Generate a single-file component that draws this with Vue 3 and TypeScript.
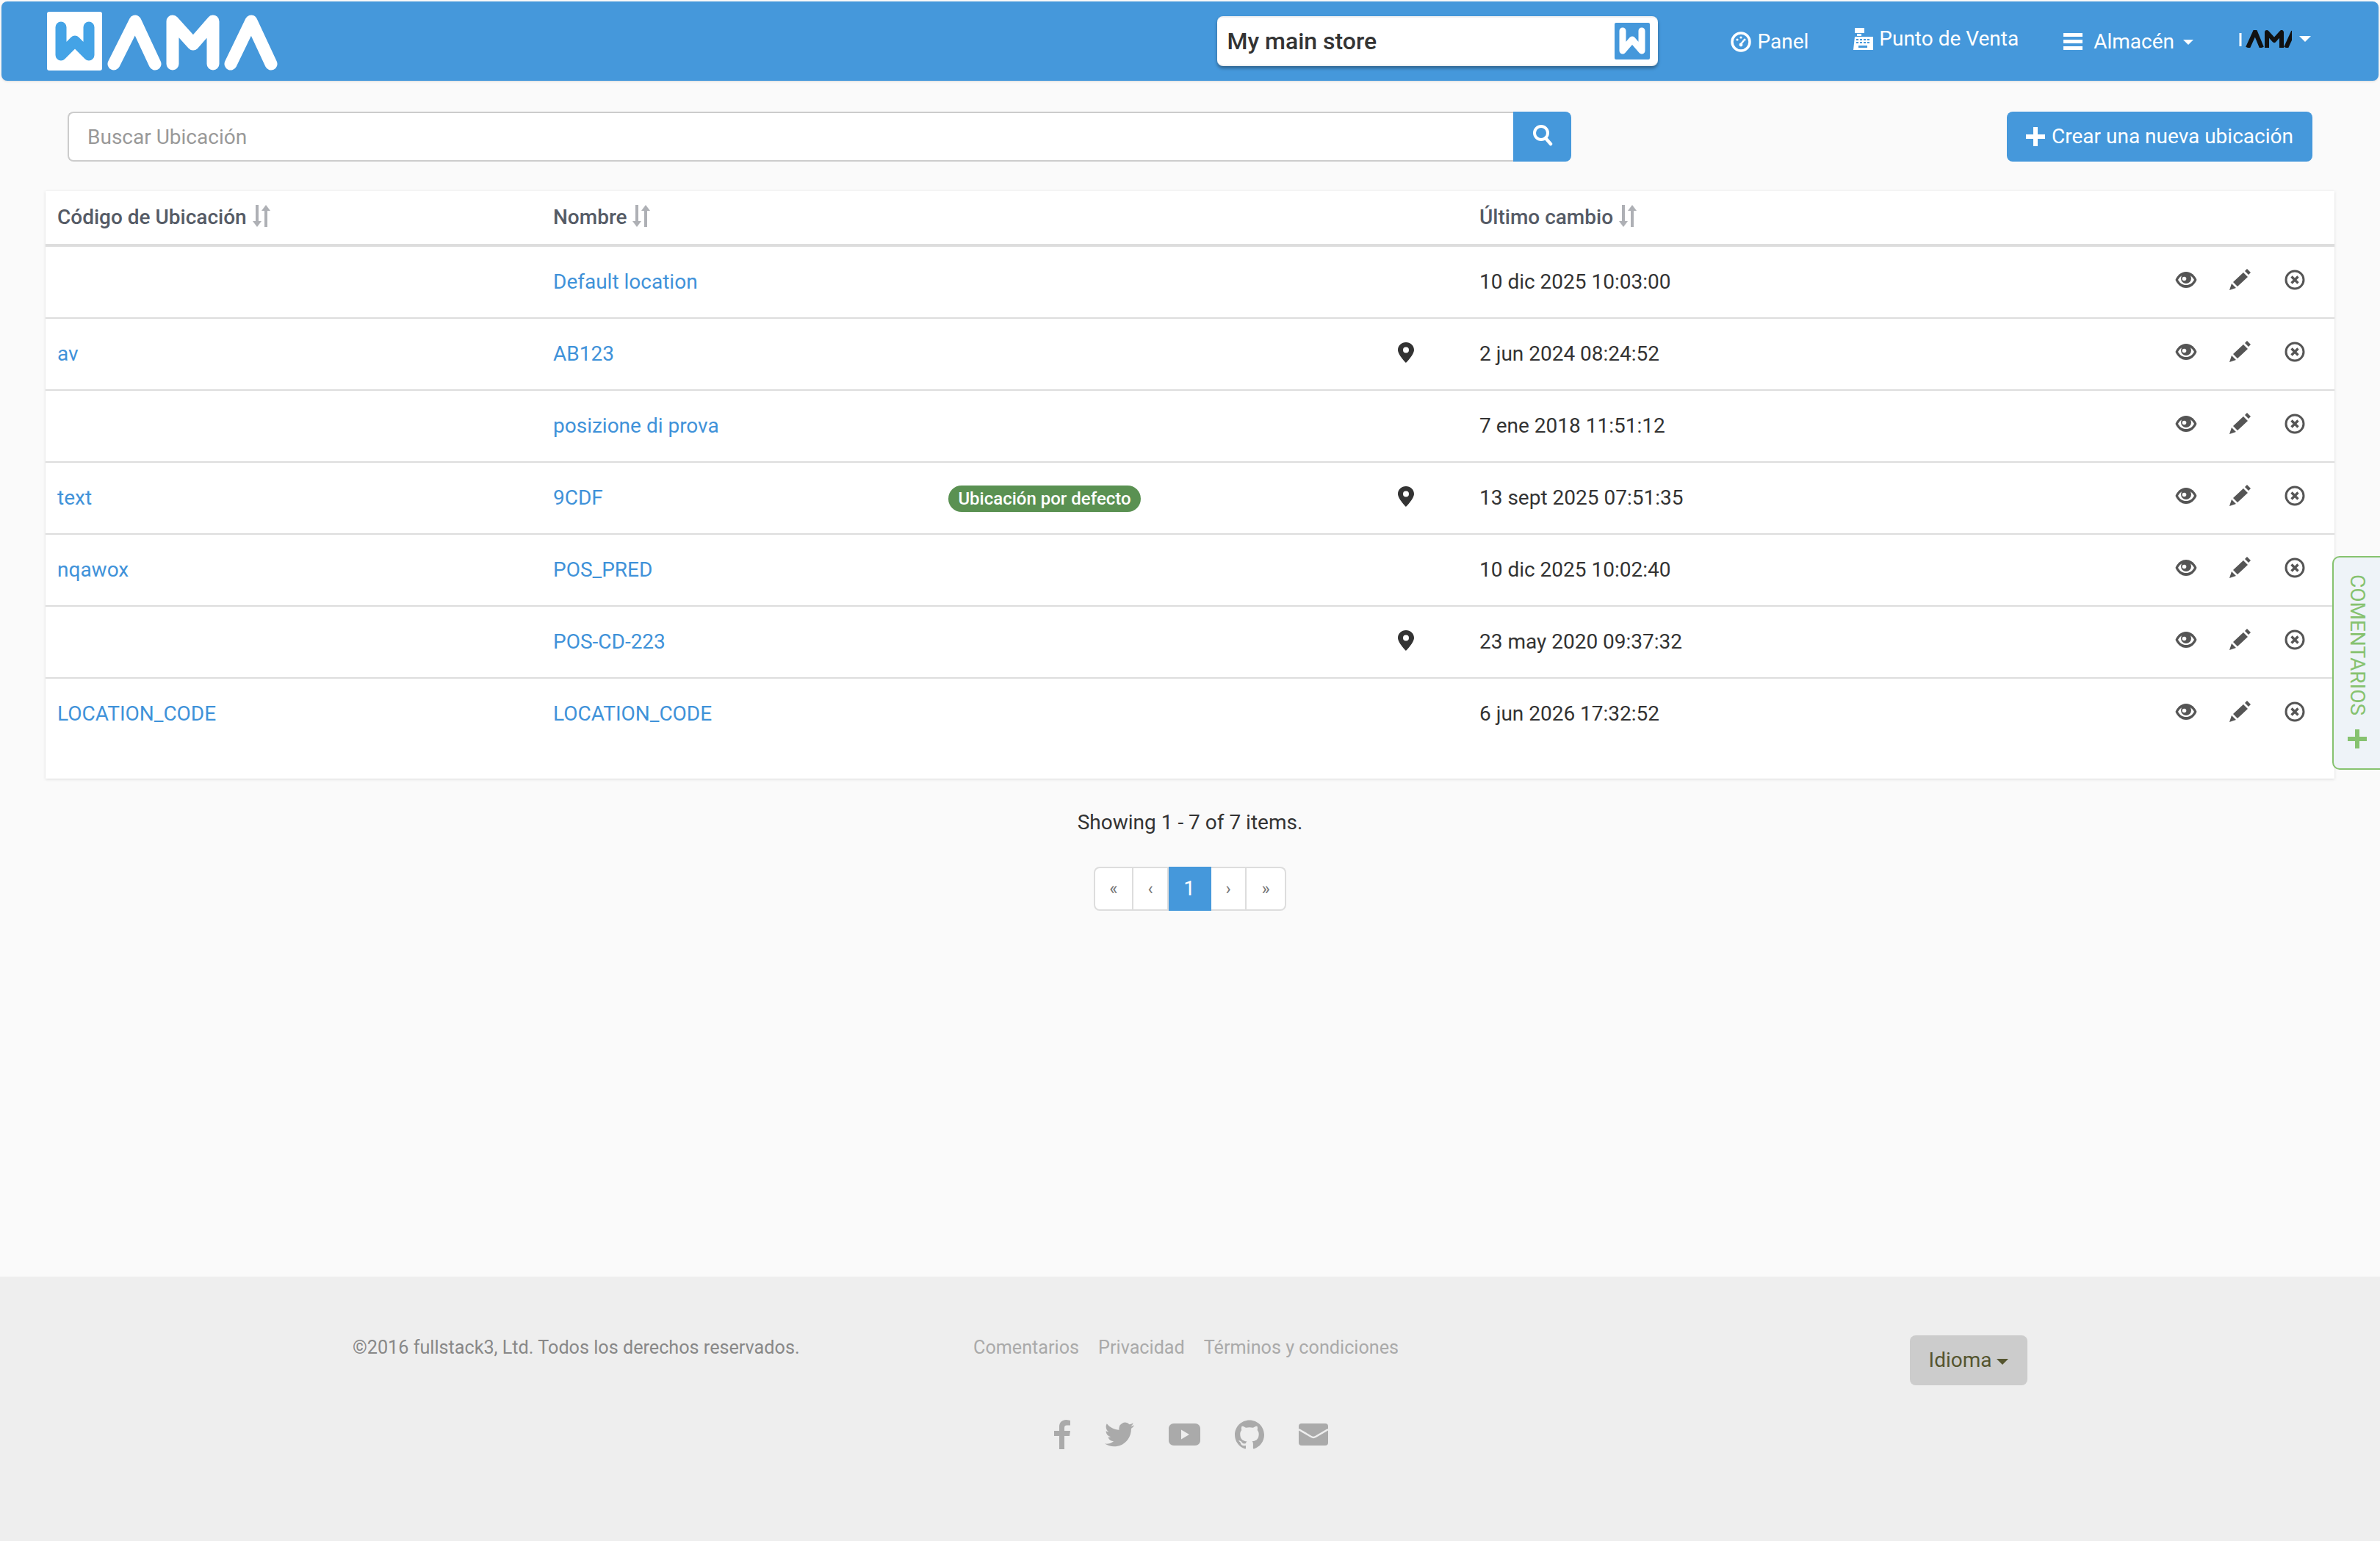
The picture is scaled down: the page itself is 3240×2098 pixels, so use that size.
<script setup lang="ts">
interface Row { code: string; name: string; badge?: string; pin?: boolean; date: string }
const rows: Row[] = [
  { code: '', name: 'Default location', date: '10 dic 2025 10:03:00' },
  { code: 'av', name: 'AB123', pin: true, date: '2 jun 2024 08:24:52' },
  { code: '', name: 'posizione di prova', date: '7 ene 2018 11:51:12' },
  { code: 'text', name: '9CDF', badge: 'Ubicación por defecto', pin: true, date: '13 sept 2025 07:51:35' },
  { code: 'nqawox', name: 'POS_PRED', date: '10 dic 2025 10:02:40' },
  { code: '', name: 'POS-CD-223', pin: true, date: '23 may 2020 09:37:32' },
  { code: 'LOCATION_CODE', name: 'LOCATION_CODE', date: '6 jun 2026 17:32:52' },
]
const heads = ['Código de Ubicación', 'Nombre', '', '', 'Último cambio', '']
const footerLinks = ['Comentarios', 'Privacidad', 'Términos y condiciones']
</script>

<template>
  <div class="page">
    <header class="topbar">
      <svg class="logo" viewBox="64 16 314 80" aria-label="WAMA">
        <rect x="64" y="16" width="75" height="80" rx="3" fill="#fff" />
        <polyline points="83,37 83,75 102,56 121,75 121,37" fill="none" stroke="#44a3e6" stroke-width="15" stroke-linecap="round" stroke-linejoin="round" />
        <g fill="none" stroke="#fff" stroke-width="17" stroke-linecap="round" stroke-linejoin="round">
          <polyline points="155,87 184,29 211,87" />
          <polyline points="235,87 235,29 263,60 290,29 290,87" />
          <polyline points="314,87 342,29 369,87" />
        </g>
      </svg>
      <div class="store">
        <span class="store-name">My main store</span>
        <svg class="store-w" viewBox="0 0 48 50">
          <rect width="48" height="50" rx="2" fill="#4598db" />
          <polyline points="11,11 11,38 24,23 37,38 37,11" fill="none" stroke="#fff" stroke-width="9" stroke-linecap="round" stroke-linejoin="round" />
        </svg>
      </div>
      <nav class="nav">
        <a class="nav-item">
          <svg class="nav-ico" width="28" height="30" viewBox="0 0 28 30">
            <circle cx="14" cy="15" r="12" fill="none" stroke="#fff" stroke-width="3.5" />
            <circle cx="9" cy="12" r="1.6" fill="#fff" /><circle cx="14" cy="9" r="1.6" fill="#fff" /><circle cx="19" cy="12" r="1.6" fill="#fff" />
            <path d="M14 18 L18 13" stroke="#fff" stroke-width="2.4" />
            <circle cx="14" cy="19" r="2.4" fill="#fff" />
          </svg>
          <span>Panel</span>
        </a>
        <a class="nav-item raised">
          <svg class="nav-ico" width="30" height="30" viewBox="0 0 30 30">
            <path fill="#fff" d="M3 0h13v7H3zM6 8h6v3H6zM3 12h25v18H1zM5 15v2h3v-2zM10 15v2h3v-2zM15 15v2h3v-2zM20 15v2h3v-2zM5 19v2h3v-2zM10 19v2h3v-2zM15 19v2h3v-2zM20 19v2h3v-2zM8 24v3h12v-3z" fill-rule="evenodd" />
          </svg>
          <span>Punto de Venta</span>
        </a>
        <a class="nav-item wide">
          <svg width="28" height="24" viewBox="0 0 28 24"><path fill="#fff" d="M1 0h26v5H1zM1 9h26v5H1zM1 18h26v5H1z" /></svg>
          <span>Almacén</span><i class="caret small" />
        </a>
        <a class="nav-item raised account">
          <svg class="mini" viewBox="0 0 72 24">
            <g fill="none" stroke="#111" stroke-width="6" stroke-linejoin="round">
              <path d="M2 4v18" stroke="#fff" stroke-width="3" />
              <polyline points="12,24 22,2 31,24" />
              <polyline points="38,24 38,3 48,14 58,3 58,24" />
              <polyline points="64,24 74,2" />
            </g>
          </svg>
          <i class="caret" />
        </a>
      </nav>
    </header>

    <section class="toolbar">
      <div class="search">
        <input class="search-input" placeholder="Buscar Ubicación" />
        <button class="search-btn" aria-label="Buscar">
          <svg width="28" height="30" viewBox="0 0 28 30">
            <circle cx="12" cy="12" r="9" fill="none" stroke="#fff" stroke-width="4" />
            <path d="M18 19 L25 27" stroke="#fff" stroke-width="4.5" stroke-linecap="round" />
          </svg>
        </button>
      </div>
      <button class="create">
        <svg width="26" height="26" viewBox="0 0 26 26"><path fill="#fff" d="M10 0h6v10h10v6H16v10h-6V16H0v-6h10z" /></svg>
        <span>Crear una nueva ubicación</span>
      </button>
    </section>

    <section class="card">
      <table class="grid">
        <colgroup>
          <col class="c1" /><col class="c2" /><col class="c3" /><col class="c4" /><col class="c5" /><col class="c6" />
        </colgroup>
        <thead>
          <tr>
            <th v-for="(h, i) in heads" :key="i">
              <template v-if="h">
                {{ h }}
                <svg class="sort" width="26" height="30" viewBox="0 0 26 30">
                  <path fill="#aeb0b5" d="M4 0h4v22h4l-6 8-6-8h4zM20 30h-4V8h-4l6-8 6 8h-4z" />
                </svg>
              </template>
            </th>
          </tr>
        </thead>
        <tbody>
          <tr v-for="r in rows" :key="r.name">
            <td><a class="link">{{ r.code }}</a></td>
            <td><a class="link">{{ r.name }}</a></td>
            <td><span v-if="r.badge" class="badge">{{ r.badge }}</span></td>
            <td>
              <svg v-if="r.pin" class="pin" width="22" height="28" viewBox="0 0 22 28">
                <path fill="#333" fill-rule="evenodd" d="M11 0C5 0 0 4.6 0 10.5 0 17 11 28 11 28s11-11 11-17.5C22 4.6 17 0 11 0zm0 6.5a4 4 0 1 1 0 8 4 4 0 0 1 0-8z" />
              </svg>
            </td>
            <td>{{ r.date }}</td>
            <td class="actions-cell">
              <div class="actions">
                <svg width="30" height="24" viewBox="0 0 30 24">
                  <path fill="#555" d="M15 1C8 1 3 6 .5 12 3 18 8 23 15 23s12-5 14.5-11C27 6 22 1 15 1z" />
                  <path fill="#fff" d="M4 12c2.500-4.500 6-7 11-7s8.500 2.500 11 7c-2.500 4.500-6 7-11 7s-8.500-2.500-11-7z" />
                  <circle cx="15" cy="10" r="7" fill="#555" />
                  <circle cx="12.500" cy="10.500" r="2.800" fill="#fff" />
                </svg>
                <svg width="30" height="30" viewBox="0 0 30 30">
                  <path fill="#555" d="M0 29l3-9 6 6zM5 18L19 5l6 6-14 13zM21 3l3-3 5 5-3 3z" />
                </svg>
                <svg width="28" height="28" viewBox="0 0 28 28">
                  <circle cx="14" cy="14" r="12" fill="none" stroke="#555" stroke-width="3" />
                  <path d="M9.500 9.500l9 9M18.500 9.500l-9 9" stroke="#555" stroke-width="3.400" />
                </svg>
              </div>
            </td>
          </tr>
        </tbody>
      </table>
    </section>

    <p class="summary">Showing 1 - 7 of 7 items.</p>

    <ul class="pager">
      <li class="p-first">«</li>
      <li class="p-prev">‹</li>
      <li class="p-active">1</li>
      <li class="p-next">›</li>
      <li class="p-last">»</li>
    </ul>

    <footer class="footer">
      <div class="foot-row">
        <p class="copy">©2016 fullstack3, Ltd. Todos los derechos reservados.</p>
        <div class="foot-links"><a v-for="l in footerLinks" :key="l">{{ l }}</a></div>
        <button class="lang">Idioma <i class="caret dark" /></button>
      </div>
      <div class="social">
        <svg width="22" height="40" viewBox="0 0 22 40"><path fill="#aaa" d="M14 40V22h7l1-7h-8v-4c0-2 .6-3.500 3.500-3.500H22V1c-1-.2-3.200-1-5.500-1C11 0 7 3.500 7 9.500V15H0v7h7v18z" /></svg>
        <svg width="40" height="40" viewBox="0 0 24 24"><path fill="#aaa" d="M23.953 4.570a10 10 0 01-2.825.775 4.958 4.958 0 002.163-2.723c-.951.555-2.005.959-3.127 1.184a4.920 4.920 0 00-8.384 4.482C7.690 8.095 4.067 6.130 1.640 3.162a4.822 4.822 0 00-.666 2.475c0 1.710.870 3.213 2.188 4.096a4.904 4.904 0 01-2.228-.616v.060a4.923 4.923 0 003.946 4.827 4.996 4.996 0 01-2.212.085 4.936 4.936 0 004.604 3.417 9.867 9.867 0 01-6.102 2.105c-.390 0-.779-.023-1.170-.067a13.995 13.995 0 007.557 2.209c9.053 0 13.998-7.496 13.998-13.985 0-.210 0-.420-.015-.630A9.935 9.935 0 0024 4.590z" /></svg>
        <svg width="43" height="30" viewBox="0 0 43 30"><path fill="#aaa" fill-rule="evenodd" d="M7 0h29c4 0 7 3 7 7v16c0 4-3 7-7 7H7c-4 0-7-3-7-7V7c0-4 3-7 7-7zm10 8.500v13l11-6.500z" /></svg>
        <svg width="40" height="40" viewBox="0 0 24 24"><path fill="#aaa" d="M12 .297c-6.630 0-12 5.373-12 12 0 5.303 3.438 9.800 8.205 11.385.600.113.820-.258.820-.577 0-.285-.010-1.040-.015-2.040-3.338.724-4.042-1.610-4.042-1.610C4.422 18.070 3.633 17.700 3.633 17.700c-1.087-.744.084-.729.084-.729 1.205.084 1.838 1.236 1.838 1.236 1.070 1.835 2.809 1.305 3.495.998.108-.776.417-1.305.760-1.605-2.665-.300-5.466-1.332-5.466-5.930 0-1.310.465-2.380 1.235-3.220-.135-.303-.540-1.523.105-3.176 0 0 1.005-.322 3.300 1.230.960-.267 1.980-.399 3-.405 1.020.006 2.040.138 3 .405 2.280-1.552 3.285-1.230 3.285-1.230.645 1.653.240 2.873.120 3.176.765.840 1.230 1.910 1.230 3.220 0 4.610-2.805 5.625-5.475 5.920.420.360.810 1.096.810 2.220 0 1.606-.015 2.896-.015 3.286 0 .315.210.690.825.570C20.565 22.092 24 17.592 24 12.297c0-6.627-5.373-12-12-12" /></svg>
        <svg width="40" height="30" viewBox="0 0 40 30">
          <rect width="40" height="30" rx="4" fill="#aaa" />
          <path d="M0 8l17 10c2 1.200 4 1.200 6 0L40 8" fill="none" stroke="#eee" stroke-width="2.500" />
        </svg>
      </div>
    </footer>

    <aside class="feedback">
      <span class="feedback-text">COMENTARIOS</span>
      <svg width="26" height="26" viewBox="0 0 26 26"><path fill="#86c26f" d="M10 0h6v10h10v6H16v10h-6V16H0v-6h10z" /></svg>
    </aside>
  </div>
</template>

<style scoped>
.page {
  position: relative;
  box-sizing: border-box;
  min-height: 2098px;
  width: 3240px;
  display: flex;
  flex-direction: column;
  background: #fafafa;
  color: #333;
  font-family: Roboto, "Liberation Sans", sans-serif;
  font-size: 28px;
  line-height: 40px;
  overflow: hidden;
}
.topbar {
  margin: 2px 2px 0;
  height: 108px;
  display: flex;
  align-items: center;
  padding-left: 62px;
  padding-right: 92px;
  box-sizing: border-box;
  background: #4598db;
  border-radius: 8px;
  box-shadow: 0 1px 3px rgba(0, 0, 0, 0.12);
}
.logo { width: 314px; height: 80px; flex: none; }
.store {
  margin-left: auto;
  width: 600px;
  height: 68px;
  box-sizing: border-box;
  padding: 0 11px 0 13px;
  display: flex;
  align-items: center;
  justify-content: space-between;
  background: #fff;
  border-radius: 8px;
  border-top: 2px solid #eef0f2;
  border-bottom: 2px solid #eef0f2;
  box-shadow: 0 3px 4px rgba(0, 0, 0, 0.35);
}
.store-name { font-size: 32px; font-weight: 500; color: #333; }
.store-w { width: 48px; height: 50px; }
.nav { margin-left: 99px; display: flex; align-items: center; gap: 60px; }
.nav-item {
  display: flex;
  align-items: center;
  gap: 8px;
  color: #fff;
  white-space: nowrap;
  padding-top: 2px;
}
.nav-item.raised { padding-top: 0; padding-bottom: 6px; gap: 6px; }
.nav-item.wide { gap: 14px; }
.nav-item.account { gap: 10px; margin-left: 2px; }
.mini { width: 72px; height: 24px; }
.caret {
  display: inline-block;
  width: 0;
  height: 0;
  border-left: 8px solid transparent;
  border-right: 8px solid transparent;
  border-top: 8px solid #fff;
}
.caret.small { border-left-width: 7px; border-right-width: 7px; border-top-width: 7px; margin-left: -2px; }
.caret.dark { border-top-color: #55552f; margin: 0 0 3px 0; }
.toolbar {
  margin-top: 42px;
  padding: 0 92px;
  display: flex;
  justify-content: space-between;
}
.search { display: flex; width: 2047px; height: 68px; }
.search-input {
  flex: 1;
  min-width: 0;
  box-sizing: border-box;
  padding: 2px 25px 0;
  border: 2px solid #ccc;
  border-right: 0;
  border-radius: 8px 0 0 8px;
  background: #fff;
  font: inherit;
  color: #333;
  outline: none;
}
.search-input::placeholder { color: #999; opacity: 1; }
.search-btn {
  width: 79px;
  border: 0;
  padding: 0 0 4px;
  border-radius: 0 8px 8px 0;
  background: #4598db;
  display: flex;
  align-items: center;
  justify-content: center;
}
.create {
  width: 416px;
  height: 68px;
  border: 0;
  border-radius: 8px;
  background: #4598db;
  color: #fff;
  font: inherit;
  display: flex;
  align-items: center;
  justify-content: center;
  gap: 9px;
}
.card {
  margin: 40px 62px 0;
  padding-bottom: 40px;
  background: #fff;
  box-shadow: 0 1px 4px rgba(0, 0, 0, 0.13);
}
.grid { width: 3116px; border-collapse: collapse; table-layout: fixed; }
.c1 { width: 675px; }
.c2 { width: 538px; }
.c3 { width: 612px; }
.c4 { width: 111px; }
.c5 { width: 940px; }
.c6 { width: 240px; }
th {
  height: 72px;
  padding: 0 16px;
  text-align: left;
  font-weight: 500;
  color: #555b66;
  white-space: nowrap;
  border-bottom: 4px solid #ddd;
}
.sort { vertical-align: -4px; margin-left: 1px; }
td {
  height: 96px;
  padding: 0 16px;
  box-sizing: content-box;
  border-bottom: 2px solid #ddd;
  white-space: nowrap;
}
tbody tr:last-child td { border-bottom: 0; }
.link { color: #3f92d9; }
.badge {
  display: inline-block;
  height: 36px;
  line-height: 36px;
  width: 262px;
  text-align: center;
  border-radius: 18px;
  background: #5a9152;
  color: #fff;
  font-size: 24px;
  font-weight: 500;
}
.pin { display: block; margin-top: -4px; }
.actions-cell { padding: 0; }
.actions { display: flex; align-items: center; margin-top: -6px; padding-left: 1px; }
.actions svg { width: 74px; flex: none; }
.summary { margin: 40px 0 0; text-align: center; }
.pager {
  margin: 40px auto 0;
  padding: 0;
  list-style: none;
  display: flex;
  height: 60px;
  font-size: 24px;
  color: #777;
}
.pager li {
  box-sizing: border-box;
  display: flex;
  align-items: center;
  justify-content: center;
  background: #fff;
  border: 2px solid #ddd;
  border-left: 0;
}
.p-first { width: 54px; border-left: 2px solid #ddd !important; border-radius: 8px 0 0 8px; }
.p-prev { width: 48px; }
.pager .p-active { width: 58px; background: #4598db; border-color: #4598db; color: #fff; font-size: 28px; }
.p-next { width: 48px; }
.p-last { width: 54px; border-radius: 0 8px 8px 0; }
.footer {
  margin-top: auto;
  height: 360px;
  box-sizing: border-box;
  padding-top: 80px;
  background: #eee;
}
.foot-row {
  margin: 0 480px;
  display: flex;
  align-items: flex-start;
}
.copy { margin: 0; width: 845px; flex: none; font-size: 25.2px; line-height: 34px; color: #888; }
.foot-links { display: flex; gap: 26px; font-size: 25.2px; line-height: 34px; color: #aaa; }
.lang {
  margin-left: auto;
  width: 160px;
  height: 68px;
  border: 0;
  border-radius: 8px;
  background: #ccc;
  color: #55552f;
  font: inherit;
}
.social {
  margin-top: 47px;
  height: 40px;
  padding-left: 2px;
  display: flex;
  align-items: center;
  justify-content: center;
  gap: 47px;
}
.feedback {
  position: absolute;
  top: 757px;
  right: 0;
  width: 65px;
  height: 291px;
  box-sizing: border-box;
  display: flex;
  flex-direction: column;
  align-items: center;
  padding-top: 23px;
  gap: 19px;
  background: #eef3f8;
  border: 2px solid #86c26f;
  border-right: 0;
  border-radius: 10px 0 0 10px;
  color: #86c26f;
}
.feedback-text { writing-mode: vertical-rl; line-height: 30px; }
</style>
